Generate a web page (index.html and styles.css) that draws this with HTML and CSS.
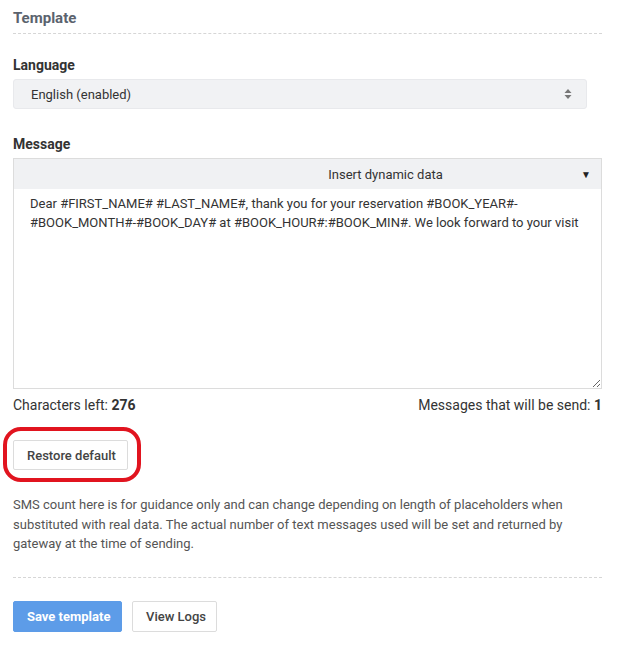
FILE: index.html
```html
<!DOCTYPE html>
<html lang="en">
<head>
    <meta charset="UTF-8">
    <meta name="viewport" content="width=device-width, initial-scale=1.0">
    <title>SMS Template</title>
    <link rel="stylesheet" href="styles.css">
</head>
<body>

    <div class="panel">
        <h3 class="section-title">Template</h3>

        <div class="field">
            <label for="language">Language</label>
            <div class="select-box" id="language">
                <span>English (enabled)</span>
                <svg class="updown" width="8" height="12" viewBox="0 0 8 12">
                    <path d="M4 1 L7.5 5 L0.5 5 Z M4 11 L7.5 7 L0.5 7 Z" fill="#777"/>
                </svg>
            </div>
        </div>

        <div class="field">
            <label for="message">Message</label>
            <div class="editor">
                <div class="dynamic-bar">
                    <span class="dynamic-label">Insert dynamic data</span>
                    <span class="caret">&#9660;</span>
                </div>
                <textarea id="message" spellcheck="true">Dear #FIRST_NAME# #LAST_NAME#, thank you for your reservation #BOOK_YEAR#-#BOOK_MONTH#-#BOOK_DAY# at #BOOK_HOUR#:#BOOK_MIN#. We look forward to your visit</textarea>
            </div>
            <div class="counters">
                <span>Characters left: <b>276</b></span>
                <span>Messages that will be send: <b>1</b></span>
            </div>
        </div>

        <div class="restore-wrap">
            <button class="btn">Restore default</button>
            <!-- red annotation ring around the button -->
            <div class="highlight"></div>
        </div>

        <p class="note">SMS count here is for guidance only and can change depending on length of placeholders when substituted with real data. The actual number of text messages used will be set and returned by gateway at the time of sending.</p>

        <div class="actions">
            <button class="btn btn-primary">Save template</button>
            <button class="btn btn-logs">View Logs</button>
        </div>
    </div>

</body>
</html>
```

FILE: styles.css
```css
/* General reset */
* {
    margin: 0;
    padding: 0;
    box-sizing: border-box;
    font-family: Roboto, "Liberation Sans", Arial, sans-serif;
}

body {
    background-color: #fff;
    color: #333;
}

.panel {
    width: 602px;
    padding: 8px 0 0 13px;
}

.section-title {
    font-size: 15px;
    font-weight: 700;
    line-height: 20px;
    color: #5b636e;
    padding-bottom: 5px;
    border-bottom: 1px dashed #d6d6d6;
}

.field {
    margin-top: 21px;
}

.field + .field {
    margin-top: 25px;
}

label {
    display: block;
    font-size: 14px;
    font-weight: 700;
    line-height: 20px;
    color: #333;
    margin-bottom: 4px;
}

.select-box {
    display: flex;
    align-items: center;
    justify-content: space-between;
    width: 574px;
    height: 30px;
    padding: 0 14px 0 17px;
    background-color: #f1f2f4;
    border: 1px solid #e8e9ec;
    border-radius: 3px;
    font-size: 13px;
    color: #333;
}

.editor {
    margin-top: 1px;
    border: 1px solid #dcdcdc;
}

.dynamic-bar {
    display: flex;
    align-items: center;
    height: 30px;
    background-color: #f0f1f3;
    font-size: 13px;
    color: #333;
}

.dynamic-label {
    flex: 1;
    text-align: center;
    padding-left: 176px;
}

.caret {
    font-size: 10px;
    width: 20px;
    color: #222;
}

textarea {
    display: block;
    width: 100%;
    height: 199px;
    border: none;
    padding: 5px 16px;
    font-size: 13px;
    line-height: 19px;
    color: #333;
    resize: vertical;
    outline: none;
}

.counters {
    display: flex;
    justify-content: space-between;
    font-size: 14px;
    line-height: 18px;
    margin-top: 7px;
    color: #333;
}

.restore-wrap {
    position: relative;
    margin-top: 26px;
    width: 115px;
}

.highlight {
    position: absolute;
    left: -10px;
    top: -13px;
    width: 138px;
    height: 55px;
    border: 4px solid #e1141f;
    border-radius: 18px;
}

.btn {
    height: 30px;
    padding: 0 13px;
    background-color: #fff;
    border: 1px solid #dcdcdc;
    border-radius: 2px;
    font-size: 13px;
    font-weight: 500;
    color: #444;
    white-space: nowrap;
    cursor: pointer;
}

.restore-wrap .btn {
    width: 115px;
}

.note {
    margin-top: 25px;
    font-size: 13px;
    line-height: 19.5px;
    color: #555;
    padding-bottom: 23px;
    border-bottom: 1px dashed #d6d6d6;
}

.actions {
    display: flex;
    gap: 10px;
    margin-top: 23px;
}

.actions .btn {
    height: 31px;
}

.btn-primary {
    width: 109px;
    background-color: #5d9ce8;
    border-color: #5d9ce8;
    color: #fff;
    font-weight: 700;
}

.btn-logs {
    width: 85px;
}
```
